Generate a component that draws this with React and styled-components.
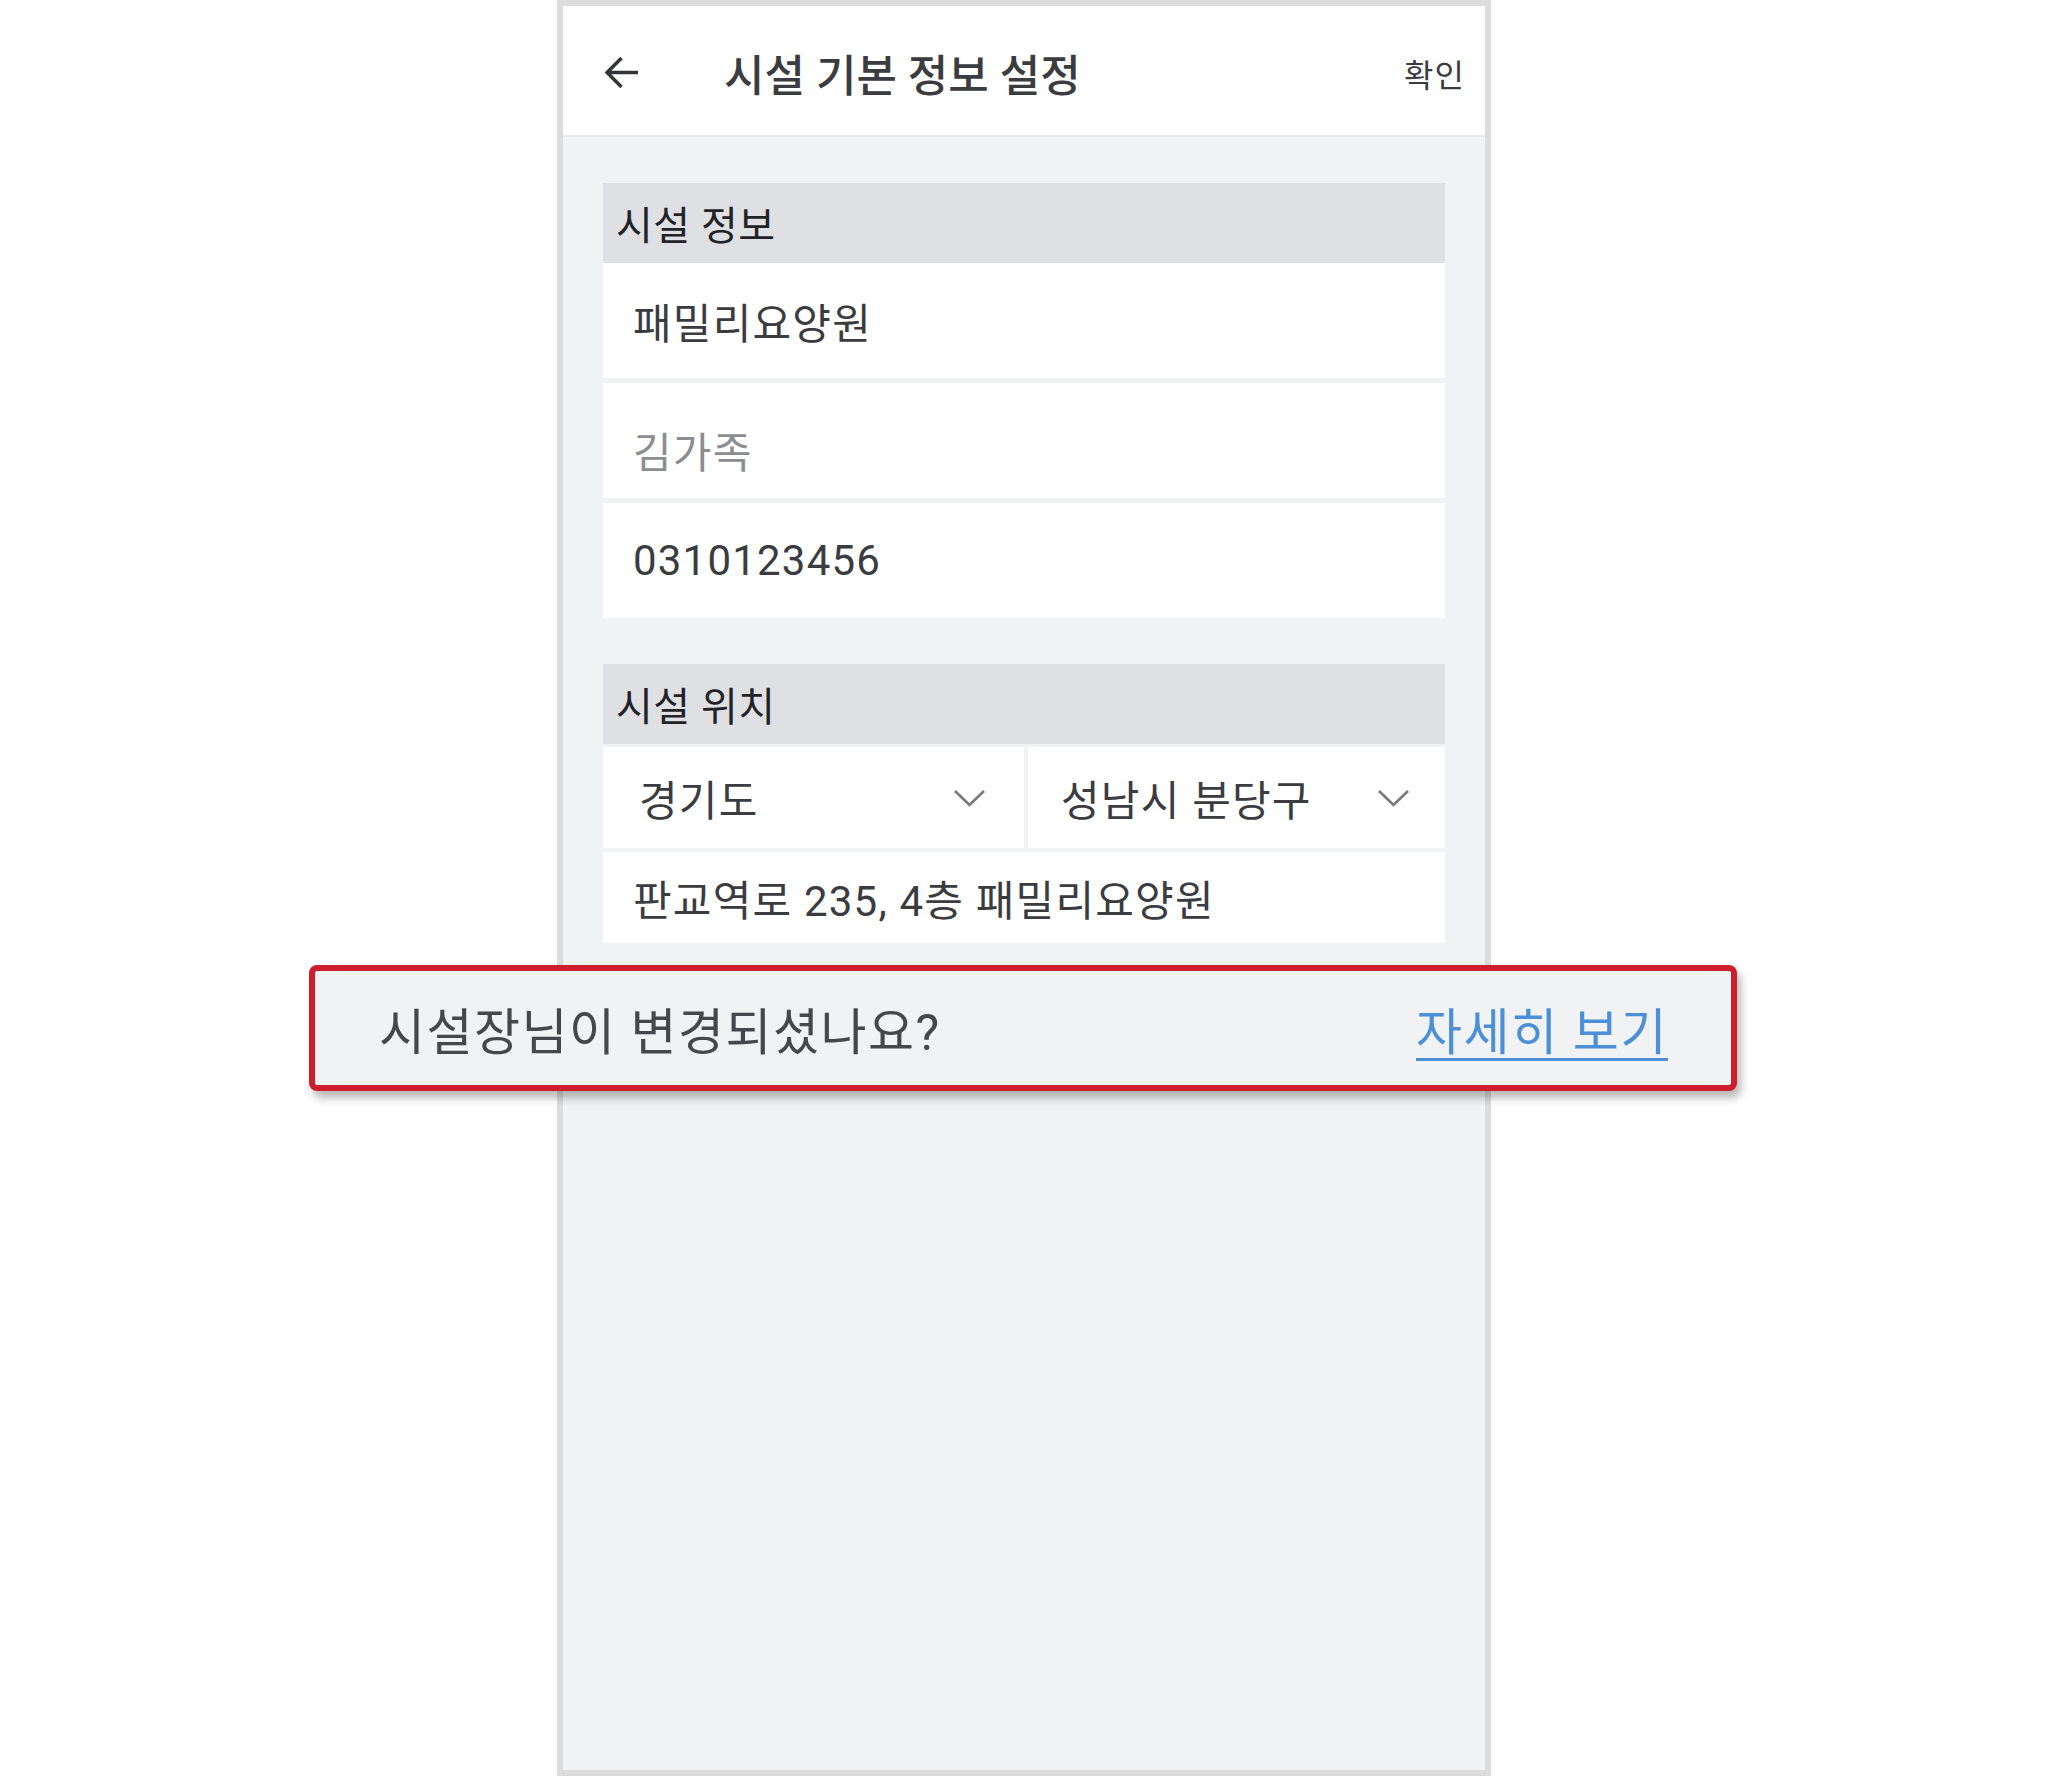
import React from "react";
import styled, { createGlobalStyle } from "styled-components";

const GlobalStyle = createGlobalStyle`
	body {
		margin: 0;
		background: #ffffff;
		font-family: Roboto, "Noto Sans CJK KR", sans-serif;
	}
`;

const Page = styled.div`
	position: relative;
	width: 2048px;
	height: 1776px;
	display: flex;
	justify-content: center;
	overflow: hidden;
`;

const Phone = styled.div`
	width: 934px;
	height: 1776px;
	box-sizing: border-box;
	border: 6px solid #dcdcdc;
	background-color: #f1f2f4;
	display: flex;
	flex-direction: column;
`;

const Header = styled.header`
	height: 131px;
	box-sizing: border-box;
	display: flex;
	align-items: center;
	padding: 4px 20px 0 41px;
	background-color: #ffffff;
	border-bottom: 2px solid #e7e8ea;
`;

const BackIcon = styled.svg`
	width: 35px;
	height: 35px;
	flex-shrink: 0;
`;

const Title = styled.h1`
	margin: 0 0 0 85px;
	font-size: 44px;
	font-weight: 500;
	color: #3a3c3f;
	letter-spacing: 0;
`;

const Confirm = styled.button`
	margin-left: auto;
	border: none;
	background: none;
	padding: 0;
	font-family: inherit;
	font-size: 32px;
	color: #3a3c3f;
	letter-spacing: 1px;
`;

const Content = styled.main`
	display: flex;
	flex-direction: column;
	gap: 46px;
	padding: 46px 40px;
`;

const Section = styled.section`
	display: flex;
	flex-direction: column;
`;

const SectionHeader = styled.div`
	height: 80px;
	display: flex;
	align-items: center;
	padding-left: 13px;
	background-color: #dfe0e3;
	font-size: 40px;
	color: #222326;
	letter-spacing: 0.5px;
`;

const Field = styled.div`
	height: ${(props) => props.height || 115}px;
	box-sizing: border-box;
	margin-top: ${(props) => props.gap || 0}px;
	display: flex;
	align-items: center;
	padding: ${(props) => props.shift || 0}px 0 0 30px;
	background-color: #ffffff;
	font-size: 42px;
	color: ${(props) => (props.$muted ? "#8b8d90" : "#3a3c3f")};
	letter-spacing: 1.2px;
`;

const SelectRow = styled.div`
	display: grid;
	grid-template-columns: 421px 1fr;
	gap: 4px;
	height: 101px;
	margin-top: 3px;
`;

const SelectCell = styled.div`
	display: flex;
	align-items: center;
	justify-content: space-between;
	padding: 0 ${(props) => props.right}px 0 ${(props) => props.left}px;
	background-color: #ffffff;
	font-size: 42px;
	color: #3a3c3f;
	letter-spacing: 1.2px;
`;

const Chevron = styled.svg`
	width: 33px;
	height: 18px;
`;

const Banner = styled.div`
	position: absolute;
	left: 309px;
	top: 965px;
	width: 1428px;
	height: 126px;
	box-sizing: border-box;
	display: flex;
	align-items: center;
	justify-content: space-between;
	padding: 0 63px 0 64px;
	background-color: #f1f2f4;
	border: 6px solid #cc1f2b;
	border-radius: 8px;
	box-shadow: 4px 7px 9px rgba(0, 0, 0, 0.28);
`;

const BannerText = styled.span`
	font-size: 50px;
	color: #45474a;
	letter-spacing: 1.5px;
`;

const BannerLink = styled.a`
	font-size: 50px;
	color: #4a8fd8;
	text-decoration: underline;
	text-underline-offset: 8px;
	text-decoration-thickness: 3px;
	letter-spacing: 1.6px;
`;

function ChevronDown() {
	return (
		<Chevron viewBox="0 0 33 18" fill="none">
			<path d="M2 2 L16.5 16 L31 2" stroke="#77797c" strokeWidth="2.6" />
		</Chevron>
	);
}

function App() {
	return (
		<Page>
			<GlobalStyle />
			<Phone>
				<Header>
					<BackIcon viewBox="0 0 34 34" fill="none">
						<path
							d="M33 17 H3 M17 3 L3 17 L17 31"
							stroke="#333538"
							strokeWidth="3.4"
						/>
					</BackIcon>
					<Title>시설 기본 정보 설정</Title>
					<Confirm>확인</Confirm>
				</Header>
				<Content>
					<Section>
						<SectionHeader>시설 정보</SectionHeader>
						<Field>패밀리요양원</Field>
						<Field gap={5} shift={18} $muted>
							김가족
						</Field>
						<Field gap={5}>0310123456</Field>
					</Section>
					<Section>
						<SectionHeader>시설 위치</SectionHeader>
						<SelectRow>
							<SelectCell left={36} right={38}>
								경기도
								<ChevronDown />
							</SelectCell>
							<SelectCell left={33} right={35}>
								성남시 분당구
								<ChevronDown />
							</SelectCell>
						</SelectRow>
						<Field height={91} gap={4}>
							판교역로 235, 4층 패밀리요양원
						</Field>
					</Section>
				</Content>
			</Phone>
			<Banner>
				<BannerText>시설장님이 변경되셨나요?</BannerText>
				<BannerLink>자세히 보기</BannerLink>
			</Banner>
		</Page>
	);
}

export default App;
